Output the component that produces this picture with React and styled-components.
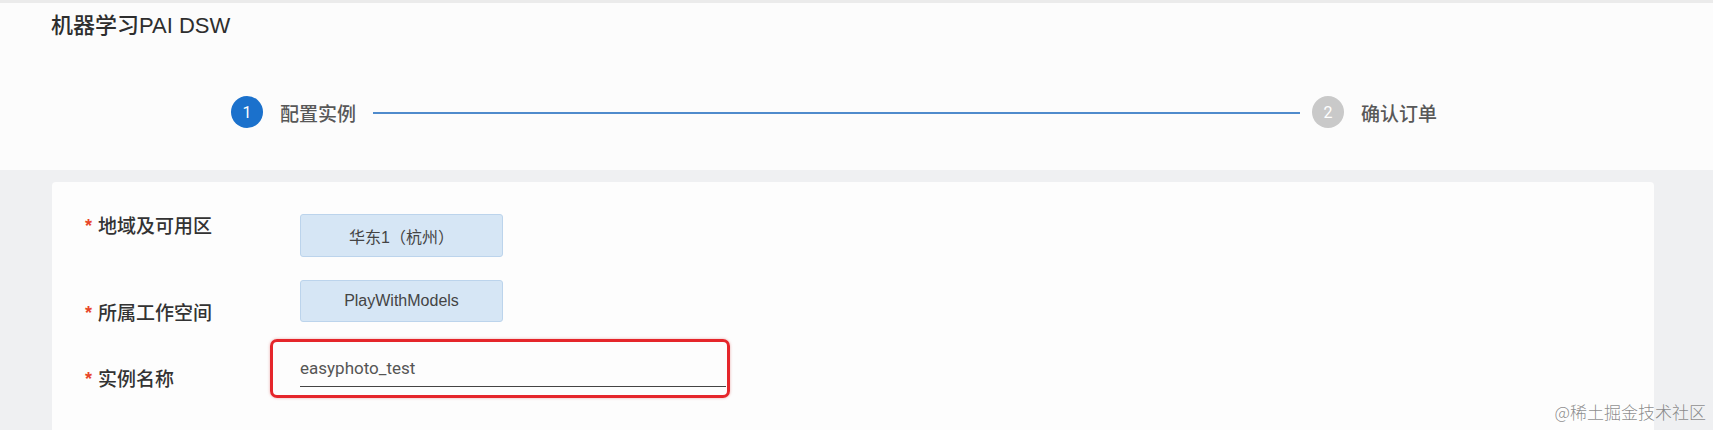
import React from "react";
import styled, { createGlobalStyle } from "styled-components";

const Global = createGlobalStyle`
  html, body { margin: 0; padding: 0; }
  body {
    font-family: "Liberation Sans", "Noto Sans CJK SC", sans-serif;
    background: #eff0f2;
  }
`;

const Page = styled.div`
  position: relative;
  width: 1713px;
  height: 430px;
  overflow: hidden;
  background: #eff0f2;
  display: flex;
  flex-direction: column;
`;

const Header = styled.header`
  background: #fcfcfc;
  border-top: 3px solid #ebebeb;
  height: 167px;
  display: flex;
  flex-direction: column;
`;

const Title = styled.h1`
  margin: 8px 0 0 51px;
  font-size: 22px;
  line-height: 30px;
  font-weight: 500;
  color: #2e2e2e;
`;

const Steps = styled.div`
  margin: 55px 0 0 231px;
  width: 1206px;
  display: flex;
  align-items: center;
  height: 32px;
`;

const StepDot = styled.span`
  flex: none;
  width: 32px;
  height: 32px;
  border-radius: 50%;
  background: ${(p) => (p.$active ? "#1b71cc" : "#c9c9c9")};
  color: #fff;
  font-family: Roboto, sans-serif;
  font-size: 16px;
  display: flex;
  align-items: center;
  justify-content: center;
`;

const StepText = styled.span`
  flex: none;
  margin-left: 17px;
  font-family: "Noto Sans CJK SC", sans-serif;
  font-size: 19px;
  font-weight: 500;
  color: #585858;
`;

const StepLine = styled.span`
  flex: 1;
  height: 2px;
  background: #4f8bcc;
  margin: 1px 12px 0 17px;
`;

const Card = styled.section`
  margin: 12px 59px 0 52px;
  flex: 1;
  background: #fdfdfd;
  border-radius: 4px 4px 0 0;
  padding: 32px 0 0 33px;
  display: flex;
  flex-direction: column;
`;

const Row = styled.div`
  display: flex;
  align-items: flex-start;
  margin-top: ${(p) => p.$gap || 0}px;
`;

const Label = styled.div`
  flex: none;
  width: 215px;
  margin-top: ${(p) => p.$offset || 0}px;
  font-family: "Noto Sans CJK SC", sans-serif;
  font-size: 19px;
  line-height: 22px;
  font-weight: 500;
  color: #333;
  display: flex;
  align-items: flex-start;
`;

const Star = styled.span`
  color: #e8462a;
  font-family: "Liberation Sans", sans-serif;
  font-size: 18px;
  font-weight: 700;
  line-height: 16px;
  margin: 4px 6px 0 0;
`;

const ValueBox = styled.div`
  width: 203px;
  height: ${(p) => p.$h}px;
  box-sizing: border-box;
  background: #d6e6f5;
  border: 1px solid #bcd4ec;
  border-radius: 3px;
  display: flex;
  align-items: center;
  justify-content: center;
  font-family: "Liberation Sans", "Noto Sans CJK SC", sans-serif;
  font-size: 16px;
  color: #444;
`;

const Highlight = styled.div`
  margin-left: -30px;
  width: 460px;
  height: 59px;
  box-sizing: border-box;
  border: 3px solid #e5262b;
  border-radius: 7px;
  box-shadow: 0 0 3px rgba(200, 20, 20, 0.35);
  padding: 14px 1px 0 27px;
`;

const Input = styled.div`
  height: 31px;
  box-sizing: border-box;
  border-bottom: 1px solid #444;
  font-family: Roboto, "Liberation Sans", sans-serif;
  font-size: 17px;
  line-height: 24px;
  color: #555;
`;

const Watermark = styled.div`
  position: absolute;
  right: 7px;
  bottom: 6px;
  font-family: "Noto Sans CJK SC", sans-serif;
  font-size: 17px;
  font-weight: 300;
  color: rgba(110, 110, 110, 0.8);
`;

export default function App() {
  return (
    <Page>
      <Global />
      <Header>
        <Title>机器学习PAI DSW</Title>
        <Steps>
          <StepDot $active>1</StepDot>
          <StepText>配置实例</StepText>
          <StepLine />
          <StepDot>2</StepDot>
          <StepText>确认订单</StepText>
        </Steps>
      </Header>
      <Card>
        <Row>
          <Label>
            <Star>*</Star>地域及可用区
          </Label>
          <ValueBox $h={43}>华东1（杭州）</ValueBox>
        </Row>
        <Row $gap={23}>
          <Label $offset={21}>
            <Star>*</Star>所属工作空间
          </Label>
          <ValueBox $h={42}>PlayWithModels</ValueBox>
        </Row>
        <Row $gap={16}>
          <Label $offset={28}>
            <Star>*</Star>实例名称
          </Label>
          <Highlight>
            <Input>easyphoto_test</Input>
          </Highlight>
        </Row>
      </Card>
      <Watermark>@稀土掘金技术社区</Watermark>
    </Page>
  );
}
